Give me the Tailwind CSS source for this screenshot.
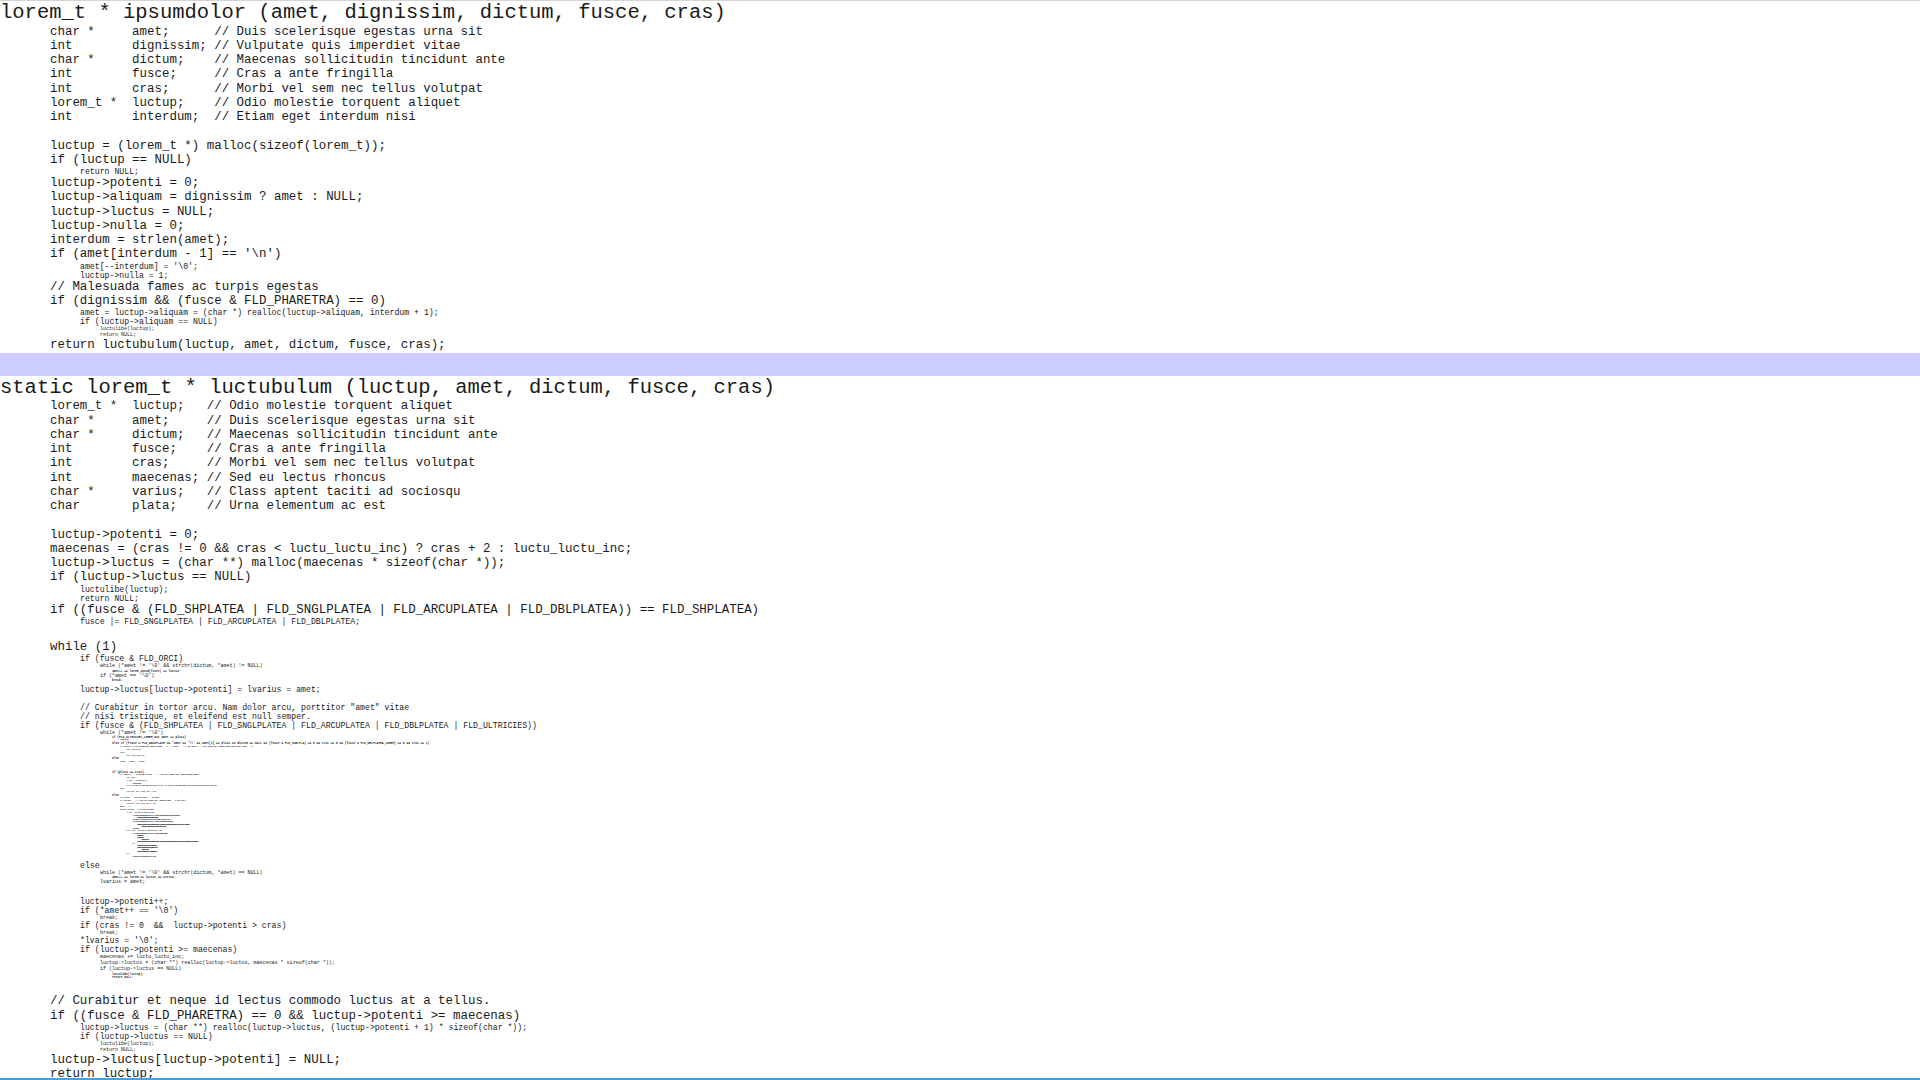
<!DOCTYPE html>
<html><head><meta charset="utf-8"><title>lorem</title>
<script src="https://cdn.jsdelivr.net/npm/@tailwindcss/browser@4"></script></head>
<body class="bg-white">
<div class="relative flex h-[1080px] w-[1920px] flex-col overflow-hidden border-t border-b-2 border-t-[#d4d4d4] border-b-[#4a9fd8] font-['Liberation_Mono',monospace] text-[#1a1a1a] [&_div:not(:has(div))]:whitespace-pre">
<h1 class="shrink-0 pt-[1px] text-[20.5px] leading-[21px] mb-[1.5px]">lorem_t * ipsumdolor (amet, dignissim, dictum, fusce, cras)</h1>
<div class="shrink-0 ml-[50px] text-[12.45px] leading-[14.25px]">
<div>char *     amet;      // Duis scelerisque egestas urna sit</div>
<div>int        dignissim; // Vulputate quis imperdiet vitae</div>
<div>char *     dictum;    // Maecenas sollicitudin tincidunt ante</div>
<div>int        fusce;     // Cras a ante fringilla</div>
<div>int        cras;      // Morbi vel sem nec tellus volutpat</div>
<div>lorem_t *  luctup;    // Odio molestie torquent aliquet</div>
<div>int        interdum;  // Etiam eget interdum nisi</div>
<div class="h-[14.25px]"></div>
<div>luctup = (lorem_t *) malloc(sizeof(lorem_t));</div>
<div>if (luctup == NULL)</div>
<div class="ml-[30px] text-[8.2px] leading-[9px]"><div>return NULL;</div></div>
<div>luctup->potenti = 0;</div>
<div>luctup->aliquam = dignissim ? amet : NULL;</div>
<div>luctup->luctus = NULL;</div>
<div>luctup->nulla = 0;</div>
<div>interdum = strlen(amet);</div>
<div>if (amet[interdum - 1] == '\n')</div>
<div class="ml-[30px] text-[8.2px] leading-[9px]"><div>amet[--interdum] = '\0';</div><div>luctup->nulla = 1;</div></div>
<div>// Malesuada fames ac turpis egestas</div>
<div>if (dignissim &amp;&amp; (fusce &amp; FLD_PHARETRA) == 0)</div>
<div class="ml-[30px] text-[8.2px] leading-[9px]"><div>amet = luctup->aliquam = (char *) realloc(luctup->aliquam, interdum + 1);</div><div>if (luctup->aliquam == NULL)</div>
<div class="ml-[20px] text-[5.03px] leading-[6px]"><div>luctulibe(luctup);</div><div>return NULL;</div></div></div>
<div>return luctubulum(luctup, amet, dictum, fusce, cras);</div>
</div>
<div class="shrink-0 mt-[1px] h-[23px] bg-[#ccccff]"></div>
<h1 class="shrink-0 mt-[1px] text-[20.5px] leading-[21px] mb-[1px]">static lorem_t * luctubulum (luctup, amet, dictum, fusce, cras)</h1>
<div class="shrink-0 ml-[50px] text-[12.45px] leading-[14.25px]">
<div>lorem_t *  luctup;   // Odio molestie torquent aliquet</div>
<div>char *     amet;     // Duis scelerisque egestas urna sit</div>
<div>char *     dictum;   // Maecenas sollicitudin tincidunt ante</div>
<div>int        fusce;    // Cras a ante fringilla</div>
<div>int        cras;     // Morbi vel sem nec tellus volutpat</div>
<div>int        maecenas; // Sed eu lectus rhoncus</div>
<div>char *     varius;   // Class aptent taciti ad sociosqu</div>
<div>char       plata;    // Urna elementum ac est</div>
<div class="h-[14.25px]"></div>
<div>luctup->potenti = 0;</div>
<div>maecenas = (cras != 0 &amp;&amp; cras &lt; luctu_luctu_inc) ? cras + 2 : luctu_luctu_inc;</div>
<div>luctup->luctus = (char **) malloc(maecenas * sizeof(char *));</div>
<div>if (luctup->luctus == NULL)</div>
<div class="ml-[30px] text-[8.2px] leading-[9px]"><div>luctulibe(luctup);</div><div>return NULL;</div></div>
<div>if ((fusce &amp; (FLD_SHPLATEA | FLD_SNGLPLATEA | FLD_ARCUPLATEA | FLD_DBLPLATEA)) == FLD_SHPLATEA)</div>
<div class="ml-[30px] text-[8.2px] leading-[9px]"><div>fusce |= FLD_SNGLPLATEA | FLD_ARCUPLATEA | FLD_DBLPLATEA;</div></div>
<div class="h-[14.25px]"></div>
<div>while (1)</div>
<div class="ml-[30px] text-[8.2px] leading-[9px]">
<div>if (fusce &amp; FLD_ORCI)</div>
<div class="ml-[20px] text-[5.03px] leading-[6.3px]">
<div>while (*amet != '\0' &amp;&amp; strchr(dictum, *amet) != NULL)</div>
<div class="ml-[12px] text-[2.95px] leading-[3.4px] [text-shadow:0_0_0.5px_#0009]"><div>amet++ == lorem_ipsum(fusce) == luctus;</div></div>
<div>if (*amet == '\0')</div>
<div class="ml-[12px] mb-[2px] text-[2.95px] leading-[3.4px] [text-shadow:0_0_0.5px_#0009]"><div>break;</div></div>
</div>
<div>luctup->luctus[luctup->potenti] = lvarius = amet;</div>
<div class="h-[9px]"></div>
<div>// Curabitur in tortor arcu. Nam dolor arcu, porttitor "amet" vitae</div>
<div>// nisi tristique, et eleifend est null semper.</div>
<div>if (fusce &amp; (FLD_SHPLATEA | FLD_SNGLPLATEA | FLD_ARCUPLATEA | FLD_DBLPLATEA | FLD_ULTRICIES))</div>
<div class="ml-[20px] text-[5.03px] leading-[6px]">
<div>while (*amet != '\0')</div>
<div class="ml-[12px] text-[2.95px] leading-[3.6px] [text-shadow:0_0_0.5px_#0009]">
<div>if (FLD_ULTRICIES_LOREM_DIC amet == plata)</div>
<div class="ml-[8px] text-[1.77px] leading-[3px]"><div>continue;</div></div>
<div>else if (fusce &amp; FLD_ARCUPLATE &amp;&amp; *amet == '\\' &amp;&amp; amet[1] == plata &amp;&amp; dictum == NULL &amp;&amp; (fusce &amp; FLD_SNGLPLA) == 0 &amp;&amp; cras == 0 &amp;&amp; (fusce &amp; FLD_DBLPLATEA_LOREM) == 0 &amp;&amp; cras == 1)</div>
<div class="ml-[8px] text-[1.77px] leading-[3px]">
<div>if (amet[1] &amp; FLD_ULTRICIES_LOREM_TORTOR == 0 || (*amet == '\\' &amp;&amp; amet[1] == FLD_ARCUPLATEA_LOREM_IPSUM_DOLOR_SIT_AMET) == 0)</div>
<div class="ml-[6.5px] text-[1.06px] leading-[2.7px]"><div>plata = lorem_t(dictum);</div></div>
<div>else</div>
<div class="ml-[6.5px] text-[1.06px] leading-[2.7px]"><div>plata = lorem_t(luctus, amet);</div></div>
</div>
<div>else</div>
<div class="ml-[8px] text-[1.77px] leading-[3px]"><div>plata = *amet++ + fusce;</div></div>
<div class="h-[7px]"></div>
<div>if (plata == cras)</div>
<div class="ml-[8px] text-[1.77px] leading-[3px]">
<div>if (amet[1] == plata &amp;&amp; dictum == '\\' &amp;&amp; FLD_ARCUPLATEA_LOREM_IPSUM_DOLOR);</div>
<div class="ml-[6.5px] text-[1.06px] leading-[2.7px]">
<div>plata = amet[1];</div>
<div>if (amet[1] == FLD_LOREM &amp;&amp; cras);</div>
<div class="ml-[6px] text-[1px] tracking-[-0.22px] leading-[2.5px]"><div>lorem_dictum_ipsum_fus;</div></div>
<div>else if (FLD_ARCUPLATEA_LOREM_TORTOR_DOLOR_AMET fusce amet != FLD_ARCUPLATEA_LOREM_IPSUM_DICTUM_TELLUS_ALIQUAM_LOREM_IPSUM_DOLOR_SIT_AMET_FUSCE);</div>
</div>
<div>else</div>
<div class="ml-[6.5px] text-[1.06px] leading-[2.7px]"><div>lorem_luctus = plata + dictum + amet[1] + fusce;</div></div>
</div>
<div>else</div>
<div class="ml-[8px] text-[1.77px] leading-[3px]">
<div>if (plata == cras &amp;&amp; fusce == dictum);</div>
<div>if (dictum == '\\' &amp;&amp; FLD_ARCUPLATEA_LOREM_IPSUM == 0 &amp;&amp; cras);</div>
<div class="ml-[6.5px] text-[1.06px] leading-[2.7px]"><div>lorem_luctus = plata + dictum + amet[1] + fusce;</div></div>
<div>amet += 2;</div>
<div>switch (plata == cras &amp;&amp; dictum);</div>
<div class="ml-[6.5px] text-[1.06px] leading-[2.7px]">
<div>if (plata == FLD_ARCUPLATEA_LOREM &amp;&amp; dictum);</div>
<div class="ml-[6px] text-[1px] tracking-[-0.22px] leading-[2.3px]">
<div>if (FLD_ARCUPLATEA_LOREM_TORTOR_DOLOR_AMET fusce amet != FLD_ARCUPLATEA_LOREM_IPSUM_DICTUM_TELLUS_ALIQUAM_LOREM_IPSUM_DOLOR);</div>
<div class="ml-[4.6px] text-[1px] tracking-[-0.37px] leading-[2px]"><div>lorem_ipsum_dolor_sit_amet_consectetur_adipiscing_elit_sed_do_eiusmod_tempor_incididunt_ut;</div></div>
<div>lorem_ipsum_dolor_sit_amet_consectetur_adipiscing_elit_sed_do_eiusmod_tempor_incididunt_ut_labore_et;</div>
<div>if (FLD_ARCUPLATEA_LOREM_TORTOR_DOLOR_AMET fusce amet != FLD_ARCUPLATEA_LOREM_IPSUM_DICTUM_TELLUS_ALIQUAM);</div>
<div class="ml-[4.6px] text-[1px] tracking-[-0.37px] leading-[2px]"><div>lorem_ipsum_dolor_sit_amet_consectetur_adipiscing_elit_sed_do_eiusmod_tempor_incididunt_ut_labore_et_dolore_magna_aliqua_ut_enim_ad_minim_veniam_quis_nostrud_exercitation_ullamco_laboris_nisi_ut_aliquip_ex_ea_commodo_consequat;</div><div class="ml-[4.4px]">lorem_ipsum_dolor_sit_amet_consectetur_adipiscing_elit_sed_do_eiusmod_tempor_incididunt_ut_labore_et_dolore;</div></div>
<div>lorem_ipsum_dolor;</div>
</div>
<div>else if (plata == FLD_ARCUPLATEA_LOREM &amp;&amp; dictum != amet);</div>
<div class="ml-[6px] text-[1px] tracking-[-0.22px] leading-[2.3px]">
<div>if (FLD_ARCUPLATEA_LOREM_TORTOR_DOLOR_AMET fusce amet != FLD_ARCUPLATEA_LOREM_IPSUM_DICTUM);</div>
<div class="ml-[4.6px] text-[1px] tracking-[-0.37px] leading-[2px]"><div>lorem_ipsum_dolor_sit_amet;</div><div>lorem_ipsum_dolor_sit_amet_c;</div><div class="ml-[4.4px]">lorem_ipsum_dolor_sit_amet_con;</div><div>lorem_ipsum_dolor_sit_amet_consectetur_adipiscing_elit_sed_do_eiusmod_tempor_incididunt_ut_labore_et_dolore_magna_aliqua_ut_enim_ad_minim_veniam_quis_nostrud_exercitation_ullamco_laboris_nisi_ut_aliquip_ex_ea_commodo_consequat_duis_aute_irure_dolor_in_reprehenderit;</div></div>
<div>else;</div>
<div class="ml-[4.6px] text-[1px] tracking-[-0.37px] leading-[2px]"><div>lorem_ipsum_dolor_sit_amet_consectetur_adipiscing_elit_sed_do_eiusmod_tempor_incididu;</div><div>lorem_ipsum_dolor_sit_amet_consectetur_adipiscing_elit_sed_do_eiusmod_tempor_incididunt_;</div><div class="ml-[4.4px]">lorem_ipsum_dolor_sit_amet_con;</div><div>lorem_ipsum_dolor_sit_amet_consectetur_adipiscing_elit_sed_do_eiusmod_tempor_incididu;</div></div>
</div>
<div>else;</div>
<div class="ml-[6px] text-[1px] tracking-[-0.22px] leading-[2.3px]"><div>lorem_ipsum_dolor_sit_amet_consectetur_adipiscing_elit_sed_do_;</div></div>
</div>
</div>
</div>
</div>
<div class="mt-[2.6px]">else</div>
<div class="ml-[20px] text-[5.03px] leading-[6px]">
<div>while (*amet != '\0' &amp;&amp; strchr(dictum, *amet) == NULL)</div>
<div class="ml-[12px] text-[2.95px] leading-[3.4px] [text-shadow:0_0_0.5px_#0009]"><div>amet++ == lorem == luctus == varius;</div></div>
<div>lvarius = amet;</div>
</div>
<div class="h-[12px]"></div>
<div>luctup->potenti++;</div>
<div>if (*amet++ == '\0')</div>
<div class="ml-[20px] text-[5.03px] leading-[6px]"><div>break;</div></div>
<div>if (cras != 0  &amp;&amp;  luctup->potenti > cras)</div>
<div class="ml-[20px] text-[5.03px] leading-[6px]"><div>break;</div></div>
<div>*lvarius = '\0';</div>
<div>if (luctup->potenti >= maecenas)</div>
<div class="ml-[20px] text-[5.03px] leading-[6px]">
<div>maecenas += luctu_luctu_inc;</div>
<div>luctup->luctus = (char **) realloc(luctup->luctus, maecenas * sizeof(char *));</div>
<div>if (luctup->luctus == NULL)</div>
<div class="ml-[12px] mt-[0.6px] text-[2.95px] leading-[3.6px] [text-shadow:0_0_0.5px_#0009]"><div>luctulibe(luctup);</div><div>return NULL;</div></div>
</div>
</div>
<div class="h-[14.25px]"></div>
<div>// Curabitur et neque id lectus commodo luctus at a tellus.</div>
<div>if ((fusce &amp; FLD_PHARETRA) == 0 &amp;&amp; luctup->potenti >= maecenas)</div>
<div class="ml-[30px] text-[8.2px] leading-[9px]"><div>luctup->luctus = (char **) realloc(luctup->luctus, (luctup->potenti + 1) * sizeof(char *));</div><div>if (luctup->luctus == NULL)</div>
<div class="ml-[20px] text-[5.03px] leading-[6px]"><div>luctulibe(luctup);</div><div>return NULL;</div></div></div>
<div>luctup->luctus[luctup->potenti] = NULL;</div>
<div>return luctup;</div>
</div>
<div class="absolute bottom-[-2px] left-[1749px] h-[2px] w-[1px] bg-[#111]"></div>
</div>
</body></html>
